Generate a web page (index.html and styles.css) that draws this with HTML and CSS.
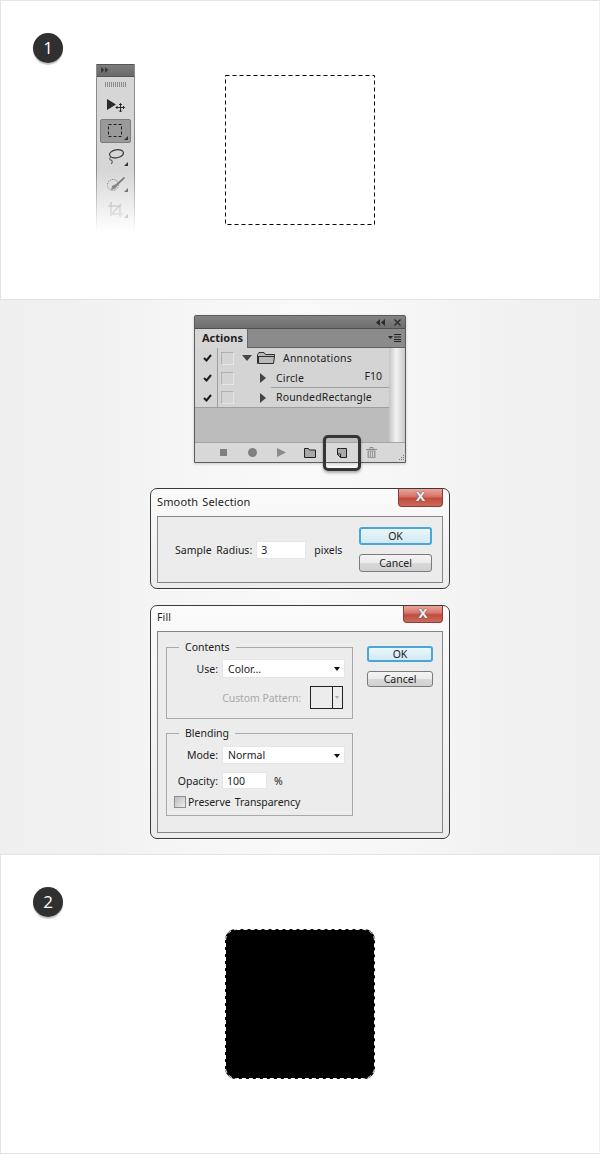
FILE: index.html
```html
<!DOCTYPE html>
<html lang="en">
<head>
<meta charset="utf-8">
<title>Smooth selection steps</title>
<link rel="stylesheet" href="styles.css">
</head>
<body>
<section class="panel">
  <div class="badge">1</div>
  <div class="tools">
    <div class="tools-head"><svg width="8" height="6" viewBox="0 0 8 6"><path d="M0 0l3.500 3-3.500 3zM4 0l3.500 3-3.500 3z" fill="#3a3a3a"/></svg></div>
    <div class="tools-grip"></div>
    <div class="tool tool-first"><svg width="18" height="13" viewBox="0 0 18 13"><path d="M0 0l9 5.500-9 5.500z" fill="#2a2a2a"/><path d="M13.500 4.500v8.500M9 8.500h8.500M12 6l1.500-1.500L15 6M12 11.500l1.500 1.500 1.500-1.500M10.500 7L9 8.500l1.500 1.500M16 7l1.500 1.500L16 10" fill="none" stroke="#2a2a2a"/></svg></div>
    <div class="tool tool-on"><svg width="14" height="13" viewBox="0 0 14 13"><rect x=".5" y=".5" width="13" height="12" fill="none" stroke="#1e1e1e" stroke-dasharray="3 2"/></svg><i class="corner"></i></div>
    <div class="tool tool-lasso"><svg width="16" height="15" viewBox="0 0 16 15"><ellipse cx="8.500" cy="4.800" rx="7" ry="4" transform="rotate(-10 8.500 4.800)" fill="none" stroke="#3a3a3a" stroke-width="1.200"/><path d="M3 8c-1.500 1-2 3 0 3 1.500 0 1.500 2 .5 4" fill="none" stroke="#3a3a3a"/></svg><i class="corner"></i></div>
    <div class="tool"><svg width="18" height="14" viewBox="0 0 18 14"><circle cx="6" cy="8" r="5.500" fill="none" stroke="#555" stroke-dasharray="1 1"/><path d="M17 0l1 1-7 7-3 4-4 1 1-4 4-2z" fill="#5c5c5c"/></svg><i class="corner"></i></div>
    <div class="tool"><svg width="15" height="16" viewBox="0 0 15 16"><path d="M0 4h12v11M3 0v12h12M2 14L13 2" fill="none" stroke="#8a8a8a" stroke-width="1.500"/></svg><i class="corner"></i></div>
    <div class="tool"><svg width="10" height="8" viewBox="0 0 10 8"><path d="M0 8l8-8 2 2-6 6z" fill="#999"/></svg></div>
  </div>
  <svg class="marquee" width="150" height="150" viewBox="0 0 150 150"><rect x=".5" y=".5" width="149" height="149" fill="none" stroke="#000" stroke-dasharray="4 3"/></svg>
</section>

<section class="middle">
  <div class="actions-wrap">
    <div class="actions">
      <div class="actions-title">
        <svg width="9" height="7" viewBox="0 0 9 7"><path d="M4 0v7L0 3.500zM9 0v7L5 3.500z" fill="#2c2c2c"/></svg>
        <svg width="7" height="7" viewBox="0 0 7 7"><path d="M.5.500l6 6M6.500.500l-6 6" stroke="#2c2c2c" stroke-width="1.400"/></svg>
      </div>
      <div class="actions-tabs">
        <div class="tab">Actions</div>
        <svg width="13" height="8" viewBox="0 0 13 8"><path d="M0 2h5L2.500 5z" fill="#222"/><path d="M6 .500h7M6 3h7M6 5.500h7M6 7.500h7" stroke="#222"/></svg>
      </div>
      <div class="actions-body">
        <div class="rows">
          <div class="row">
            <div class="cell-check"><svg width="9" height="8" viewBox="0 0 9 8"><path d="M1 4l2.500 2.500L8 1" fill="none" stroke="#1c1c1c" stroke-width="2"/></svg></div>
            <div class="cell-box"></div>
            <svg class="tri-down" width="10" height="6" viewBox="0 0 10 6"><path d="M0 0h10L5 6z" fill="#444"/></svg>
            <svg class="folder" width="18" height="12" viewBox="0 0 18 12"><path d="M.5 2.500L2 .5h5l1.500 2h9v2h-16l-1 7zM1.500 11.500h15l1-7H1.500z" fill="#b9b9b9" stroke="#2e2e2e"/></svg>
            <span class="name name-folder">Annnotations</span>
          </div>
          <div class="row row-line">
            <div class="cell-check"><svg width="9" height="8" viewBox="0 0 9 8"><path d="M1 4l2.500 2.500L8 1" fill="none" stroke="#1c1c1c" stroke-width="2"/></svg></div>
            <div class="cell-box"></div>
            <svg class="tri-right" width="6" height="10" viewBox="0 0 6 10"><path d="M0 0l6 5-6 5z" fill="#444"/></svg>
            <span class="name">Circle</span>
            <span class="key">F10</span>
          </div>
          <div class="row row-full">
            <div class="cell-check"><svg width="9" height="8" viewBox="0 0 9 8"><path d="M1 4l2.500 2.500L8 1" fill="none" stroke="#1c1c1c" stroke-width="2"/></svg></div>
            <div class="cell-box"></div>
            <svg class="tri-right" width="6" height="10" viewBox="0 0 6 10"><path d="M0 0l6 5-6 5z" fill="#444"/></svg>
            <span class="name">RoundedRectangle</span>
          </div>
        </div>
        <div class="scroll"></div>
      </div>
      <div class="actions-foot">
        <svg class="f-stop" width="7" height="7" viewBox="0 0 7 7"><rect width="7" height="7" fill="#808080"/></svg>
        <svg class="f-rec" width="9" height="9" viewBox="0 0 9 9"><circle cx="4.500" cy="4.500" r="4.500" fill="#808080"/></svg>
        <svg class="f-play" width="9" height="9" viewBox="0 0 9 9"><path d="M0 0l9 4.500L0 9z" fill="#8a8a8a"/></svg>
        <svg class="f-dir" width="12" height="10" viewBox="0 0 12 10"><path d="M.5.500h4l1 1.500h6v7.500H.5z" fill="#a8a8a8" stroke="#222"/></svg>
        <svg class="f-new" width="10" height="10" viewBox="0 0 10 10"><path d="M3.500.500h6v9h-6l-3-3V.500z" fill="#a8a8a8" stroke="#222"/><path d="M.5 6h3v3.500z" fill="#e8e8e8" stroke="#222"/></svg>
        <svg class="f-bin" width="11" height="11" viewBox="0 0 11 11"><path d="M0 2.500h11M4 2V.5h3V2" fill="none" stroke="#888"/><path d="M1.500 3.500h8V11h-8z" fill="#999"/><path d="M3.500 4.500V10M5.500 4.500V10M7.500 4.500V10" stroke="#d4d4d4"/></svg>
        <svg class="f-grip" width="7" height="7" viewBox="0 0 7 7"><path d="M6 0h1v1H6zM4 2h1v1H4zM6 2h1v1H6zM2 4h1v1H2zM4 4h1v1H4zM6 4h1v1H6zM0 6h1v1H0zM2 6h1v1H2zM4 6h1v1H4zM6 6h1v1H6z" fill="#777"/></svg>
      </div>
    </div>
    <div class="highlight"></div>
  </div>

  <div class="dialog dialog-smooth">
    <div class="dialog-head"><span class="dialog-title">Smooth Selection</span><div class="close close-wide"><span>x</span></div></div>
    <div class="dialog-body">
      <div class="smooth-form">
        <span class="label">Sample Radius:</span>
        <div class="input input-radius">3</div>
        <span class="label">pixels</span>
      </div>
      <div class="buttons buttons-smooth">
        <div class="btn btn-ok">OK</div>
        <div class="btn">Cancel</div>
      </div>
    </div>
  </div>

  <div class="dialog dialog-fill">
    <div class="dialog-head"><span class="dialog-title dialog-title-fill">Fill</span><div class="close close-fill"><span>x</span></div></div>
    <div class="dialog-body">
      <div class="groups">
        <fieldset class="group group-contents">
          <legend>Contents</legend>
          <div class="field field-use"><span class="label label-col">Use:</span><div class="select">Color...<i class="caret"></i></div></div>
          <div class="field field-pattern"><span class="label label-off">Custom Pattern:</span><div class="swatch"><div class="swatch-main"></div><div class="swatch-arrow"><i></i></div></div></div>
        </fieldset>
        <fieldset class="group group-blending">
          <legend>Blending</legend>
          <div class="field field-mode"><span class="label label-col">Mode:</span><div class="select">Normal<i class="caret"></i></div></div>
          <div class="field field-opacity"><span class="label label-col">Opacity:</span><div class="input input-opacity">100</div><span class="label label-pct">%</span></div>
          <div class="field field-check"><div class="checkbox"></div><span class="label label-preserve">Preserve Transparency</span></div>
        </fieldset>
      </div>
      <div class="buttons buttons-fill">
        <div class="btn btn-ok">OK</div>
        <div class="btn">Cancel</div>
      </div>
    </div>
  </div>
</section>

<section class="panel panel-last">
  <div class="badge">2</div>
  <svg class="marquee-filled" width="150" height="150" viewBox="0 0 150 150"><rect width="150" height="150" rx="11" fill="#000"/><rect x=".5" y=".5" width="149" height="149" rx="11" fill="none" stroke="#fff" stroke-dasharray="4 3"/></svg>
</section>
</body>
</html>
```
FILE: styles.css
```css
* { box-sizing: border-box; }
html, body { margin: 0; padding: 0; }
body {
  width: 600px;
  height: 1154px;
  overflow: hidden;
  background: #fff;
  font-family: "Noto Sans", "Open Sans", sans-serif;
  font-size: 10.500px;
  color: #222;
}
svg { display: block; flex: none; }

/* white step panels */
.panel {
  height: 300px;
  display: flex;
  align-items: flex-start;
  background: #fff;
  border: 1px solid #e4e4e4;
  border-right-color: #f0f0f0;
  padding: 32px 0 0 32px;
}
.panel-last { height: 300px; }
.badge {
  width: 30px;
  height: 30px;
  flex: none;
  border-radius: 50%;
  background: #303030;
  box-shadow: 0 2px 1px #c4c4c4;
  color: #fff;
  font-family: "Open Sans", sans-serif;
  font-size: 17px;
  line-height: 30px;
  text-align: center;
}
.marquee { margin: 42px 0 0 90px; }
.marquee-filled { margin: 42px 0 0 162px; }

/* tool strip */
.tools {
  width: 39px;
  height: 171px;
  margin: 31px 0 0 33px;
  background: #d6d6d6;
  border-left: 1px solid #8c8c8c;
  border-right: 1px solid #8c8c8c;
  -webkit-mask-image: linear-gradient(#000 62%, transparent 98%);
  mask-image: linear-gradient(#000 62%, transparent 98%);
}
.tools-head {
  height: 13px;
  background: linear-gradient(#7c7c7c, #696969);
  border-top: 1px solid #555;
  border-bottom: 1px solid #555;
  padding: 2px 0 0 4px;
}
.tools-grip {
  height: 5px;
  margin: 5px 8px 0;
  background: repeating-linear-gradient(90deg, #8b8b8b 0 1px, transparent 1px 2px);
}
.tool {
  position: relative;
  height: 26px;
  display: flex;
  align-items: center;
  justify-content: center;
}
.tool-first { height: 26px; margin: 5px 0 0; }
.tool-lasso svg { margin-top: -3px; }
.tool-on {
  width: 31px;
  height: 24px;
  margin: 1px 3px 2px;
  background: #9a9a9a;
  border: 1px solid #7d7d7d;
  border-radius: 2px;
}
.tool-on svg { margin-top: -1px; margin-left: -1px; }
.corner {
  position: absolute;
  right: 6px;
  bottom: 5px;
  width: 0;
  height: 0;
  border-left: 4px solid transparent;
  border-bottom: 4px solid #333;
}
.tool-on .corner { right: 2px; bottom: 2px; }

/* middle backdrop */
.middle {
  height: 554px;
  display: flex;
  flex-direction: column;
  align-items: center;
  padding-top: 15px;
  background: linear-gradient(90deg, #efefef 0, #f1f1f1 15%, #f6f6f6 32%, #f9f9f9 50%, #f6f6f6 68%, #f1f1f1 85%, #efefef 100%);
}

/* actions panel */
.actions-wrap { position: relative; width: 212px; height: 148px; }
.actions {
  width: 212px;
  height: 148px;
  display: flex;
  flex-direction: column;
  border: 1px solid #5c5c5c;
  border-radius: 2px 2px 0 0;
  box-shadow: 0 1px 3px rgba(0,0,0,.18);
  background: #d6d6d6;
}
.actions-title {
  height: 13px;
  flex: none;
  display: flex;
  align-items: center;
  justify-content: flex-end;
  gap: 9px;
  padding-right: 4px;
  background: linear-gradient(#828282, #6f6f6f);
  border-bottom: 1px solid #4f4f4f;
}
.actions-tabs {
  height: 19px;
  flex: none;
  display: flex;
  align-items: center;
  justify-content: space-between;
  padding-right: 4px;
  background: #8b8b8b;
  border-bottom: 1px solid #5f5f5f;
}
.tab {
  width: 53px;
  height: 19px;
  margin-bottom: -1px;
  background: #d6d6d6;
  border-right: 1px solid #666;
  font-weight: 700;
  font-size: 11px;
  line-height: 17px;
  padding-left: 7px;
  color: #222;
}
.actions-body { flex: 1; display: flex; min-height: 0; }
.rows { width: 194px; background: #bcbcbc; }
.scroll { flex: 1; background: linear-gradient(90deg, #c4c4c4, #f3f3f3 45%, #c9c9c9); }
.row {
  position: relative;
  height: 20px;
  display: flex;
  align-items: center;
  background: #d4d4d4;
}
.row-line::after {
  content: "";
  position: absolute;
  left: 76px;
  right: 0;
  bottom: 0;
  height: 1px;
  background: #9e9e9e;
}
.row-full { border-bottom: 1px solid #9e9e9e; }
.cell-check {
  width: 23px;
  height: 20px;
  padding: 6px 0 0 8px;
  border-right: 1px solid #9e9e9e;
  flex: none;
}
.cell-box {
  width: 13px;
  height: 13px;
  margin-left: 3px;
  flex: none;
  border: 1px solid;
  border-color: #b0b0b0 #e6e6e6 #e6e6e6 #b0b0b0;
  background: #d4d4d4;
}
.tri-down { margin-left: 8px; }
.folder { margin-left: 5px; }
.name { color: #222; font-size: 10.500px; letter-spacing: .15px; margin-top: -1px; }
.name-folder { margin-left: 8px; letter-spacing: .2px; }
.tri-right { margin-left: 26px; }
.row .tri-right + .name { margin-left: 10px; }
.key { margin-left: auto; margin-right: 7px; margin-top: -4px; font-size: 10.500px; }
.actions-foot {
  height: 20px;
  flex: none;
  display: flex;
  align-items: center;
  background: #d8d8d8;
  border-top: 1px solid #a4a4a4;
}
.f-stop { margin-left: 25px; }
.f-rec { margin-left: 21px; }
.f-play { margin-left: 20px; }
.f-dir { margin-left: 18px; }
.f-new { margin-left: 21px; }
.f-bin { margin-left: 19px; }
.f-grip { margin-left: 22px; margin-top: 8px; }
.highlight {
  position: absolute;
  left: 129px;
  top: 120px;
  width: 38px;
  height: 36px;
  border: 3px solid #353535;
  border-radius: 5px;
  box-shadow: 0 2px 3px rgba(0,0,0,.3);
}

/* dialogs */
.dialog {
  width: 300px;
  display: flex;
  flex-direction: column;
  background: linear-gradient(#fbfbfb, #ededed);
  border: 1px solid #3a3a3a;
  border-radius: 7px;
  padding: 0 6px 5px;
  box-shadow: 0 1px 2px rgba(255,255,255,.8);
}
.dialog-smooth { height: 101px; margin-top: 25px; }
.dialog-fill { height: 234px; margin-top: 16px; }
.dialog-head {
  display: flex;
  justify-content: space-between;
  align-items: flex-start;
  flex: none;
}
.dialog-smooth .dialog-head { height: 27px; }
.dialog-fill .dialog-head { height: 25px; }
.dialog-title { font-size: 11px; padding-top: 5px; color: #1e1e1e; letter-spacing: .15px; word-spacing: 1px; }
.dialog-title-fill { padding-top: 4px; font-size: 10.500px; }
.close {
  height: 18px;
  background: linear-gradient(#eaa69c 0, #d9776b 42%, #c14c3c 56%, #cc6a5c 100%);
  border: 1px solid #8d3d35;
  border-top: 0;
  border-radius: 0 0 4px 4px;
  display: flex;
  align-items: center;
  justify-content: center;
  color: #f0f0f0;
  font-family: "Liberation Sans", sans-serif;
  font-weight: 700;
  font-size: 17px;
  line-height: 1;
}
.close span { margin-top: -4px; text-shadow: 0 0 1px #444, 0 0 1px #444; }
.close-wide { width: 45px; }
.close-fill { width: 40px; height: 17px; }
.dialog-body {
  flex: 1;
  display: flex;
  justify-content: space-between;
  background: #ececec;
  border: 1px solid #868686;
}
.label { font-size: 10.500px; color: #222; white-space: nowrap; word-spacing: 2px; }
.input {
  height: 18px;
  background: #fff;
  border: 1px solid #e6e6e6;
  font-size: 10.500px;
  line-height: 17px;
  padding-left: 4px;
}
.smooth-form {
  display: flex;
  align-items: center;
  padding: 0 0 0 17px;
}
.input-radius { width: 50px; margin: 0 8px 0 4px; }
.buttons { display: flex; flex-direction: column; flex: none; }
.buttons-smooth { width: 73px; gap: 9px; margin: 10px 10px 0 0; }
.buttons-fill { width: 66px; gap: 9px; margin: 14px 9px 0 0; }
.btn {
  height: 18px;
  border: 1px solid #7b7b7b;
  border-radius: 3px;
  background: linear-gradient(#f4f4f4 0, #ebebeb 48%, #d9d9d9 52%, #cfcfcf 100%);
  text-align: center;
  font-size: 10.500px;
  line-height: 16px;
  color: #222;
}
.buttons-fill .btn { height: 16px; line-height: 14px; }
.btn-ok {
  border: 2px solid #4aa6d6;
  line-height: 14px;
  background: linear-gradient(#eaf6fb, #d2e9f3);
}
.buttons-fill .btn-ok { line-height: 12px; }

/* fill form */
.groups { width: 196px; padding: 8px 0 0 8px; }
.group {
  width: 187px;
  margin: 0;
  padding: 0;
  border: 1px solid #a9a9a9;
  min-width: 0;
}
.group legend {
  margin-left: 12px;
  padding: 0 6px;
  font-size: 10.500px;
  line-height: 14px;
  color: #222;
}
.group-contents { height: 79px; }
.group-blending { height: 90px; margin-top: 7px; }
.field { display: flex; align-items: center; }
.label-col { width: 51px; text-align: right; margin-right: 4px; }
.field-use { margin-top: 5px; }
.field-mode { margin-top: 6px; }
.select {
  position: relative;
  width: 123px;
  height: 19px;
  background: #fff;
  border: 1px solid #e6e6e6;
  padding-left: 5px;
  font-size: 10.500px;
  line-height: 18px;
}
.field-mode .select { height: 18px; line-height: 17px; }
.caret {
  position: absolute;
  right: 4px;
  top: 7px;
  width: 0;
  height: 0;
  border: 3.500px solid transparent;
  border-top: 4px solid #111;
  border-bottom: 0;
}
.field-pattern { margin-top: 8px; justify-content: flex-end; padding-right: 9px; }
.label-off { color: #a9a9a9; margin-right: 9px; word-spacing: 0; letter-spacing: -.1px; }
.swatch { width: 33px; height: 23px; display: flex; border: 1px solid #222; }
.swatch-main { flex: 1; border-right: 1px solid #222; }
.swatch-arrow { width: 9px; position: relative; }
.swatch-arrow i {
  position: absolute;
  left: 2px;
  top: 9px;
  width: 0;
  height: 0;
  border: 2.500px solid transparent;
  border-top: 3px solid #aaa;
  border-bottom: 0;
}
.field-opacity { margin-top: 8px; }
.input-opacity { width: 45px; height: 17px; line-height: 16px; }
.label-pct { margin-left: 7px; }
.field-check { margin-top: 6px; padding-left: 7px; }
.label-preserve { word-spacing: 1.500px; letter-spacing: -.05px; }
.checkbox {
  width: 12px;
  height: 12px;
  margin-right: 2px;
  border: 1px solid #8d8d8d;
  background: linear-gradient(135deg, #bdbdbd, #ececec);
}
```
